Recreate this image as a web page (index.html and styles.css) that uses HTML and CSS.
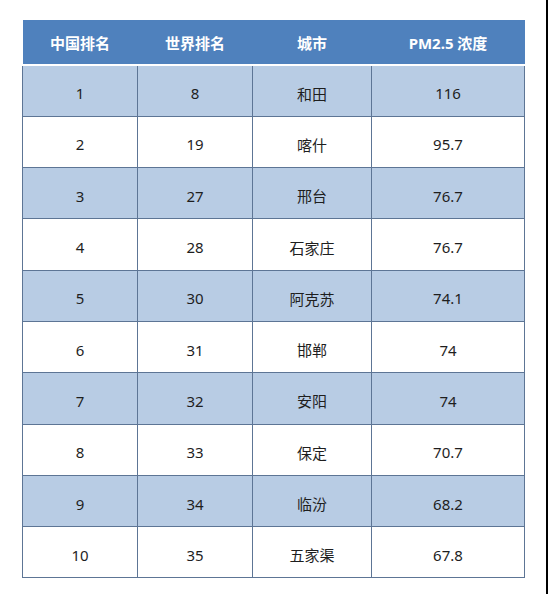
FILE: index.html
```html
<!DOCTYPE html>
<html lang="zh">
<head>
<meta charset="utf-8">
<link rel="stylesheet" href="styles.css">
</head>
<body>
<div class="page">
  <main class="content">
    <table class="rank">
      <colgroup>
        <col class="c1"><col class="c2"><col class="c3"><col class="c4">
      </colgroup>
      <thead>
        <tr><th>中国排名</th><th>世界排名</th><th>城市</th><th>PM2.5 浓度</th></tr>
      </thead>
      <tbody>
        <tr class="alt"><td>1</td><td>8</td><td>和田</td><td>116</td></tr>
        <tr><td>2</td><td>19</td><td>喀什</td><td>95.7</td></tr>
        <tr class="alt"><td>3</td><td>27</td><td>邢台</td><td>76.7</td></tr>
        <tr><td>4</td><td>28</td><td>石家庄</td><td>76.7</td></tr>
        <tr class="alt"><td>5</td><td>30</td><td>阿克苏</td><td>74.1</td></tr>
        <tr><td>6</td><td>31</td><td>邯郸</td><td>74</td></tr>
        <tr class="alt"><td>7</td><td>32</td><td>安阳</td><td>74</td></tr>
        <tr><td>8</td><td>33</td><td>保定</td><td>70.7</td></tr>
        <tr class="alt"><td>9</td><td>34</td><td>临汾</td><td>68.2</td></tr>
        <tr><td>10</td><td>35</td><td>五家渠</td><td>67.8</td></tr>
      </tbody>
    </table>
  </main>
  <div class="edge"></div>
</div>
</body>
</html>
```
FILE: styles.css
```css
html, body {
  margin: 0;
  padding: 0;
  background: #ffffff;
}
.page {
  display: flex;
  width: 548px;
  height: 594px;
}
.content {
  flex: 1;
  padding: 20px 0 0 22px;
}
.edge {
  width: 2px;
  background: #000000;
}
.rank {
  border-collapse: collapse;
  table-layout: fixed;
  width: 502px;
  font-family: "Noto Sans", "Noto Sans CJK SC", sans-serif;
  font-size: 15px;
  color: #1e1e1e;
}
.c1 { width: 115px; }
.c2 { width: 115px; }
.c3 { width: 119px; }
.c4 { width: 153px; }
.rank thead tr {
  background: #4f81bd;
}
.rank th {
  height: 44px;
  padding: 0;
  color: #ffffff;
  font-weight: bold;
  text-align: center;
  vertical-align: middle;
  border-bottom: 2px solid #ffffff;
}
.rank td {
  height: 51.3px;
  padding: 5px 0 0 0;
  box-sizing: border-box;
  text-align: center;
  vertical-align: middle;
  border: 1px solid #5d7595;
}
.rank tbody tr {
  background: #ffffff;
}
.rank tbody tr.alt {
  background: #b8cce4;
}
```
